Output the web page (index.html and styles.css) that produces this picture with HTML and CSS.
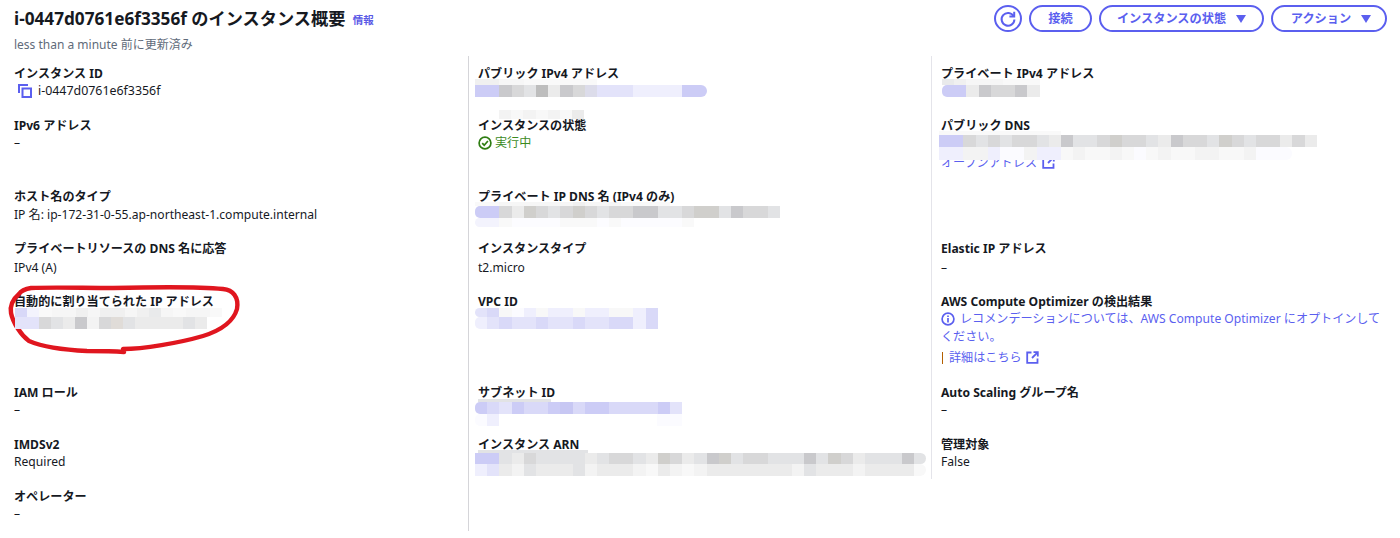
FILE: index.html
```html
<!DOCTYPE html>
<html lang="ja">
<head>
<meta charset="utf-8">
<title>インスタンス概要</title>
<link rel="stylesheet" href="styles.css">
</head>
<body>
<main class="page">
  <header class="head">
    <div class="head-text">
      <h1 class="title">i-0447d0761e6f3356f のインスタンス概要 <a class="info">情報</a></h1>
      <p class="updated">less than a minute 前に更新済み</p>
    </div>
    <div class="actions">
      <button class="btn btn-icon" aria-label="更新"><svg width="18" height="18" viewBox="0 0 18 18" fill="none" stroke="currentColor" stroke-width="2"><path d="M14.6 6.2A6.4 6.4 0 1 0 15.4 9.4"/><path d="M15.2 1.8V6.6H10.4" stroke-linejoin="miter"/></svg></button>
      <button class="btn btn-connect">接続</button>
      <button class="btn btn-state">インスタンスの状態<span class="caret"></span></button>
      <button class="btn btn-action">アクション<span class="caret"></span></button>
    </div>
  </header>

  <section class="grid">
    <div class="cell c1 r1"><div class="label">インスタンス ID</div><div class="value id-value"><svg class="copy" width="16" height="16" viewBox="0 0 16 16" fill="none" stroke="currentColor" stroke-width="2"><path d="M2 10V2H11"/><rect x="5.5" y="5.5" width="8.5" height="8.5"/></svg>i-0447d0761e6f3356f</div></div>
    <div class="cell c1 r2"><div class="label">IPv6 アドレス</div><div class="value">–</div></div>
    <div class="cell c1 r3"><div class="label">ホスト名のタイプ</div><div class="value">IP 名: ip-172-31-0-55.ap-northeast-1.compute.internal</div></div>
    <div class="cell c1 r4"><div class="label">プライベートリソースの DNS 名に応答</div><div class="value">IPv4 (A)</div></div>
    <div class="cell c1 r5"><div class="label">自動的に割り当てられた IP アドレス</div>
      <div class="mosaic m-low m-in">
        <div class="mrow h9 fade"><i class="a"></i><i class="c"></i><i class="j"></i><i class="h"></i><i class="h"></i><i class="g"></i><i class="h"></i><i class="g"></i><i class="g"></i><i class="h"></i><i class="g"></i><i class="f"></i><i class="h"></i><i class="j"></i><i class="h"></i><i class="h"></i><i class="j"></i></div>
        <div class="mrow h12 tight"><i class="b"></i><i class="b"></i><i class="e"></i><i class="f"></i><i class="g"></i><i class="d"></i><i class="h"></i><i class="e"></i><i class="w"></i><i class="f"></i><i class="g"></i><i class="g"></i><i class="g"></i><i class="g"></i><i class="f"></i><i class="g"></i></div>
      </div>
    </div>
    <div class="cell c1 r6"><div class="label">IAM ロール</div><div class="value">–</div></div>
    <div class="cell c1 r7"><div class="label">IMDSv2</div><div class="value">Required</div></div>
    <div class="cell c1 r8"><div class="label">オペレーター</div><div class="value">–</div></div>

    <div class="cell c2 r1"><div class="label">パブリック IPv4 アドレス</div>
      <div class="mosaic">
        <div class="mrow h6 fade"><i class="g"></i><i class="g"></i><i class="h"></i><i class="h"></i><i class="j"></i><i class="j"></i><i class="j"></i><i class="j"></i><i class="j"></i><i class="j"></i></div>
        <div class="mrow h12 round-r"><i class="a"></i><i class="a"></i><i class="d"></i><i class="e"></i><i class="f"></i><i class="k"></i><i class="g"></i><i class="d"></i><i class="e"></i><i class="l"></i><i class="b"></i><i class="b"></i><i class="b"></i><i class="c"></i><i class="c"></i><i class="c"></i><i class="c"></i><i class="a"></i><i class="a"></i></div>
        <div class="mrow h13"></div>
        <div class="mrow h9 indent2"><i class="h"></i><i class="j"></i><i class="h"></i><i class="j"></i><i class="h"></i><i class="j"></i><i class="g"></i></div>
      </div>
    </div>
    <div class="cell c2 r2"><div class="label">インスタンスの状態</div><div class="value status"><svg class="ok" width="14" height="14" viewBox="0 0 14 14" fill="none" stroke="currentColor" stroke-width="1.7"><circle cx="7" cy="7" r="5.9"/><path d="M4.2 7.2 6.2 9.2 9.9 5"/></svg>実行中</div></div>
    <div class="cell c2 r3"><div class="label">プライベート IP DNS 名 (IPv4 のみ)</div>
      <div class="mosaic">
        <div class="mrow h4 fade"><i class="j"></i><i class="j"></i><i class="h"></i><i class="h"></i><i class="h"></i><i class="h"></i><i class="h"></i><i class="h"></i><i class="g"></i><i class="h"></i><i class="h"></i><i class="h"></i><i class="j"></i><i class="j"></i><i class="j"></i><i class="j"></i></div>
        <div class="mrow h12 round-l"><i class="a"></i><i class="a"></i><i class="e"></i><i class="g"></i><i class="d2"></i><i class="e"></i><i class="f"></i><i class="e"></i><i class="d2"></i><i class="e"></i><i class="f"></i><i class="e"></i><i class="e"></i><i class="d"></i><i class="d"></i><i class="f"></i><i class="f"></i><i class="e"></i><i class="d2"></i><i class="d2"></i><i class="f"></i><i class="d"></i><i class="e"></i><i class="e"></i><i class="f"></i></div>
        <div class="mrow h9 fade round-l"><i class="c"></i><i class="c"></i><i class="j"></i><i class="x"></i><i class="x"></i><i class="x"></i><i class="x"></i><i class="j"></i><i class="j"></i><i class="j"></i><i class="x"></i><i class="j"></i><i class="x"></i><i class="x"></i><i class="x"></i><i class="x"></i><i class="x"></i><i class="j"></i></div>
      </div>
    </div>
    <div class="cell c2 r4"><div class="label">インスタンスタイプ</div><div class="value">t2.micro</div></div>
    <div class="cell c2 r5"><div class="label">VPC ID</div>
      <div class="mosaic m-low">
        <div class="mrow h9 round-l"><i class="b"></i><i class="n"></i><i class="j"></i><i class="x"></i><i class="c"></i><i class="j"></i><i class="c"></i><i class="c"></i><i class="j"></i><i class="c"></i><i class="c"></i><i class="j"></i><i class="j"></i><i class="c"></i><i class="n"></i></div>
        <div class="mrow h12 round-l"><i class="c"></i><i class="b"></i><i class="n"></i><i class="b"></i><i class="b"></i><i class="n"></i><i class="b"></i><i class="b"></i><i class="n"></i><i class="b"></i><i class="b"></i><i class="n"></i><i class="n"></i><i class="c"></i><i class="n"></i></div>
      </div>
    </div>
    <div class="cell c2 r6"><div class="label">サブネット ID</div>
      <div class="mosaic m-low">
        <div class="mrow h3 indent1"><i class="f"></i><i class="f"></i><i class="f"></i><i class="f"></i><i class="f"></i><i class="f"></i></div>
        <div class="mrow h12 round-l"><i class="a"></i><i class="n"></i><i class="b"></i><i class="a"></i><i class="n"></i><i class="n"></i><i class="a"></i><i class="a2"></i><i class="n"></i><i class="a"></i><i class="a"></i><i class="n"></i><i class="n"></i><i class="n"></i><i class="n"></i><i class="a"></i><i class="b"></i></div>
        <div class="mrow h12 round-l"><i class="x"></i><i class="c"></i><i class="gapfill"></i><i class="x"></i><i class="x"></i></div>
      </div>
    </div>
    <div class="cell c2 r7"><div class="label">インスタンス ARN</div>
      <div class="mosaic">
        <div class="mrow h3 indent1"><i class="f"></i><i class="f"></i><i class="f"></i><i class="f"></i><i class="f"></i><i class="f"></i><i class="f"></i><i class="f"></i><i class="f"></i></div>
        <div class="mrow h11 round-r"><i class="a"></i><i class="a"></i><i class="f"></i><i class="g"></i><i class="e"></i><i class="f"></i><i class="f"></i><i class="f"></i><i class="f"></i><i class="g"></i><i class="f"></i><i class="e"></i><i class="e"></i><i class="f"></i><i class="g"></i><i class="d2"></i><i class="e"></i><i class="g"></i><i class="f"></i><i class="d"></i><i class="d2"></i><i class="f"></i><i class="e"></i><i class="e"></i><i class="f"></i><i class="f"></i><i class="f"></i><i class="d"></i><i class="f"></i><i class="d2"></i><i class="e"></i><i class="g"></i><i class="f"></i><i class="f"></i><i class="f"></i><i class="d"></i><i class="f"></i></div>
        <div class="mrow h12 round-r"><i class="c"></i><i class="b"></i><i class="g"></i><i class="h"></i><i class="f"></i><i class="g"></i><i class="g"></i><i class="g"></i><i class="f"></i><i class="h"></i><i class="g"></i><i class="g"></i><i class="g"></i><i class="h"></i><i class="j"></i><i class="g"></i><i class="h"></i><i class="j"></i><i class="h"></i><i class="g"></i><i class="g"></i><i class="g"></i><i class="g"></i><i class="g"></i><i class="g"></i><i class="g"></i><i class="h"></i><i class="f"></i><i class="g"></i><i class="g"></i><i class="g"></i><i class="h"></i><i class="g"></i><i class="g"></i><i class="g"></i><i class="g"></i><i class="j"></i></div>
      </div>
    </div>

    <div class="cell c3 r1"><div class="label">プライベート IPv4 アドレス</div>
      <div class="mosaic m-in">
        <div class="mrow h6 fade"><i class="f"></i><i class="g"></i><i class="h"></i><i class="h"></i><i class="h"></i><i class="j"></i><i class="j"></i><i class="j"></i></div>
        <div class="mrow h12 round-l"><i class="a"></i><i class="a"></i><i class="g"></i><i class="d"></i><i class="e"></i><i class="e"></i><i class="d"></i><i class="g"></i></div>
      </div>
    </div>
    <div class="cell c3 r2"><div class="label">パブリック DNS</div>
      <div class="mosaic dns">
        <div class="mrow h4 fade"><i class="j"></i><i class="j"></i><i class="j"></i><i class="j"></i><i class="j"></i><i class="j"></i><i class="j"></i><i class="j"></i><i class="j"></i><i class="j"></i></div>
        <div class="mrow h12"><i class="a"></i><i class="a"></i><i class="e"></i><i class="f"></i><i class="e"></i><i class="f"></i><i class="e"></i><i class="e"></i><i class="f"></i><i class="g"></i><i class="d"></i><i class="f"></i><i class="f"></i><i class="e"></i><i class="d2"></i><i class="e"></i><i class="e"></i><i class="f"></i><i class="g"></i><i class="d"></i><i class="e"></i><i class="e"></i><i class="f"></i><i class="d2"></i><i class="e"></i><i class="f"></i><i class="e"></i><i class="e"></i><i class="g"></i><i class="e"></i><i class="g"></i></div>
        <div class="mrow h13 round-r"><i class="c"></i><i class="c"></i><i class="h"></i><i class="h"></i><i class="c"></i><i class="x"></i><i class="x"></i><i class="h"></i><i class="c"></i><i class="c"></i><i class="j"></i><i class="h"></i><i class="j"></i><i class="j"></i><i class="h"></i><i class="j"></i><i class="x"></i><i class="j"></i><i class="h"></i><i class="j"></i><i class="j"></i><i class="h"></i><i class="h"></i><i class="j"></i><i class="j"></i><i class="h"></i><i class="x"></i><i class="x"></i><i class="x"></i></div>
      </div>
      <a class="link open-link">オープンアドレス<svg class="ext" width="13" height="13" viewBox="0 0 13 13" fill="none" stroke="currentColor" stroke-width="1.8"><path d="M5.5 1.5H1.2V11.8H11.5V7.5"/><path d="M7.5 1.2H11.8V5.5"/><path d="M11.6 1.4 6 7"/></svg></a>
    </div>
    <div class="cell c3 r4"><div class="label">Elastic IP アドレス</div><div class="value">–</div></div>
    <div class="cell c3 r5"><div class="label">AWS Compute Optimizer の検出結果</div>
      <p class="link note"><svg class="inf" width="14" height="14" viewBox="0 0 14 14" fill="none" stroke="currentColor" stroke-width="1.7"><circle cx="7" cy="7" r="5.9"/><path d="M7 6V10.4M7 3.4V5"/></svg>レコメンデーションについては、AWS Compute Optimizer にオプトインしてください。</p>
      <div class="more"><span class="bar"></span><a class="link">詳細はこちら<svg class="ext ext-more" width="13" height="13" viewBox="0 0 13 13" fill="none" stroke="currentColor" stroke-width="1.8"><path d="M5.5 1.5H1.2V11.8H11.5V7.5"/><path d="M7.5 1.2H11.8V5.5"/><path d="M11.6 1.4 6 7"/></svg></a></div>
    </div>
    <div class="cell c3 r6"><div class="label">Auto Scaling グループ名</div><div class="value">–</div></div>
    <div class="cell c3 r7"><div class="label">管理対象</div><div class="value">False</div></div>
  </section>

  <svg class="scribble" width="250" height="80" viewBox="0 0 250 80" fill="none"><path d="M16 11C9 17 7 24 8 30C10 40 18 52 26 58C40 64 62 67 84 68C96 68 108 68 121 69L120 66C140 66 176 60 200 53C216 48 230 40 234 26C236 14 230 7 220 6C190 3 150 4 110 5C80 5 50 4 28 5C22 6 18 8 16 11Z" stroke="#e0161f" stroke-width="4.4" stroke-linecap="round" stroke-linejoin="round"/></svg>
</main>
</body>
</html>
```

FILE: styles.css
```css
* { box-sizing: border-box; }
html, body { margin: 0; padding: 0; background: #fff; }
body {
  font-family: "Noto Sans", "Noto Sans CJK JP", sans-serif;
  font-size: 12.1px;
  color: #16191f;
  overflow: hidden;
}
.page { position: relative; width: 1400px; height: 538px; }

.head {
  display: flex;
  justify-content: space-between;
  align-items: flex-start;
  height: 56px;
  padding: 5px 13px 0 14px;
}
.title {
  margin: 0;
  font-size: 17.2px;
  line-height: 28px;
  font-weight: 700;
  color: #16191f;
}
.info {
  margin-left: 3px;
  font-size: 10.5px;
  font-weight: 700;
  color: #5a5ae6;
  vertical-align: 1px;
}
.updated {
  margin: 2px 0 0;
  font-size: 12px;
  line-height: 18px;
  color: #5f6b7a;
}
.actions { display: flex; gap: 7px; }
.btn {
  display: flex;
  align-items: center;
  justify-content: center;
  height: 27px;
  padding: 2px 0 0;
  border: 2px solid #5b5fef;
  border-radius: 14px;
  background: #fff;
  color: #5b5fef;
  font: 700 12.2px/1 "Noto Sans", "Noto Sans CJK JP", sans-serif;
}
.btn-icon { width: 28px; padding: 0; border-radius: 50%; }
.btn-connect { width: 63px; }
.btn-state { width: 165px; }
.btn-action { width: 116px; padding-left: 4px; }
.caret {
  width: 0;
  height: 0;
  margin: -1px 0 0 10px;
  border-left: 5px solid transparent;
  border-right: 5px solid transparent;
  border-top: 8px solid #5b5fef;
}

.grid {
  display: grid;
  grid-template-columns: 469px 463px 1fr;
  grid-template-rows: 52px 71px 52px 53px 91px 52px 52px 52px;
}
.cell { padding-top: 10px; }
.c1 { grid-column: 1; padding-left: 14px; border-right: 1px solid #d5d5d9; }
.c2 { grid-column: 2; padding-left: 9px; border-right: 1px solid #e4e4ea; }
.c3 { grid-column: 3; padding-left: 9px; }
.r1 { grid-row: 1; }
.r2 { grid-row: 2; }
.r3 { grid-row: 3; }
.r4 { grid-row: 4; }
.r5 { grid-row: 5; }
.r6 { grid-row: 6; }
.r7 { grid-row: 7; }
.r8 { grid-row: 8; }
.label {
  font-size: 12.1px;
  line-height: 16px;
  font-weight: 700;
  color: #16191f;
}
.value {
  display: flex;
  align-items: center;
  font-size: 12.1px;
  line-height: 17px;
  color: #16191f;
}
.r3 .value { margin-top: 1px; }
.r4 .value { margin-top: 2px; }
.id-value { font-size: 12.4px; }
.copy { margin: 1px 5px 0 3px; color: #5b5fef; }
.status { color: #3b8a1e; }
.ok { margin-right: 3px; color: #2f7d13; }

.mosaic {
  position: relative;
  z-index: 1;
  height: 19px;
  margin: -3px 0 0 -3px;
}
.m-low { margin-top: -2px; height: 18px; }
.m-in { margin-left: 1px; }
.dns { margin-left: -2px; }
.mrow { display: flex; width: max-content; overflow: hidden; }
.mrow i { display: block; width: 12.2px; flex: none; }
.mrow.tight i { width: 12px; }
.h3 { height: 3px; }
.h4 { height: 4px; }
.h6 { height: 6px; }
.h9 { height: 9px; }
.h11 { height: 11px; }
.h12 { height: 12px; }
.h13 { height: 13px; }
.fade { opacity: .75; }
.round-l { border-top-left-radius: 5px; border-bottom-left-radius: 5px; }
.round-r { border-top-right-radius: 6px; border-bottom-right-radius: 6px; }
.indent1 { margin-left: 3px; }
.indent2 { margin-left: 24px; }
.mrow .gapfill { width: 158px; }

.mrow .a { background: #ccccf6; }
.mrow .a2 { background: #c7c7f3; }
.mrow .n { background: #d9d9f8; }
.mrow .b { background: #e3e3fa; }
.mrow .c { background: #efeffd; }
.mrow .l { background: #dcdcea; }
.mrow .k { background: #bdbdbd; }
.mrow .d { background: #c9c9cc; }
.mrow .d2 { background: #d0cfcc; }
.mrow .e { background: #d8d8d9; }
.mrow .w { background: #e0dcd8; }
.mrow .f { background: #e2e3e5; }
.mrow .g { background: #ebebeb; }
.mrow .h { background: #f3f3f3; }
.mrow .j { background: #f8f8f8; }
.mrow .x { background: #fbfbff; }

.link { color: #5b5fef; font-size: 12.1px; line-height: 17px; }
.ext { margin-left: 5px; vertical-align: -2px; }
.ext-more { margin-left: 4px; }
.open-link {
  display: block;
  margin-top: 4px;
}
.note {
  margin: 0;
  width: 446px;
  line-height: 18px;
}
.inf { margin-right: 5px; vertical-align: -3px; }
.more { display: flex; align-items: center; margin-top: 3px; }
.bar { width: 1px; height: 12px; margin: 0 6px 0 1px; background: #b45f00; }

.scribble { position: absolute; left: 3px; top: 283px; pointer-events: none; }
```
